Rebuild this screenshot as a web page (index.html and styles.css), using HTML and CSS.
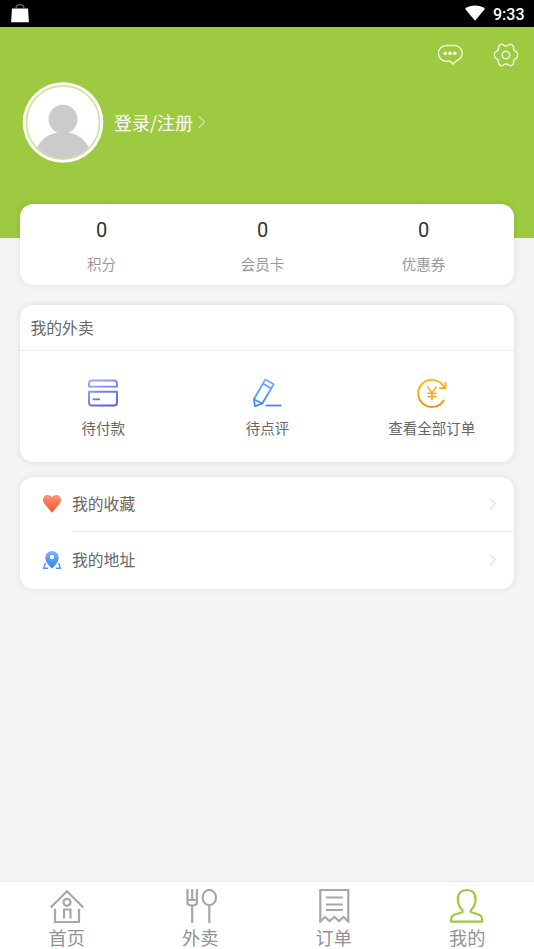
FILE: index.html
```html
<!DOCTYPE html>
<html lang="zh-CN">
<head>
<meta charset="utf-8">
<title>我的</title>
<link rel="stylesheet" href="styles.css">
</head>
<body>
<div class="status">
  <svg class="bag" width="20" height="20" viewBox="0 0 20 20"><path d="M2 5.5h16l.9 13.7H1.1z" fill="#fff"/><path d="M6 5.5C6 .3 14 .3 14 5.5" fill="none" stroke="#666" stroke-width="1.3"/></svg>
  <div class="status-right">
    <svg width="20" height="16" viewBox="0 0 20 16"><path d="M0 3.7C5.5-.6 14.5-.6 20 3.7L10 15.7z" fill="#fff"/></svg>
    <span class="time">9:33</span>
  </div>
</div>
<header class="hero">
  <div class="tools">
    <svg width="26" height="24" viewBox="0 0 26 24" fill="none" stroke="#fff" stroke-opacity=".85" stroke-width="1.4" stroke-linejoin="round"><path d="M9.300 2.500h7.500a7.700 7.800 0 0 1 3 15.200Q17.800 18.700 16 21.200L13.300 18.200H9.300A7.800 7.800 0 0 1 9.300 2.500z"/><g fill="#fff" stroke="none"><circle cx="8.300" cy="10.300" r="1.800"/><circle cx="13" cy="10.300" r="1.800"/><circle cx="17.800" cy="10.300" r="1.800"/></g></svg>
    <svg width="26" height="24" viewBox="0 0 26 24" fill="none" stroke="#fff" stroke-opacity=".85" stroke-width="1.4" stroke-linejoin="round"><path d="M7.800 1.300Q9 .8 10 1.900Q13 4.200 16 1.900Q17 .8 18.200 1.300Q20.700 2.400 20.500 4.400Q20.200 8 23.500 8.900Q24.500 9.200 24.600 12Q24.500 14.800 23.500 15.100Q20.200 16 20.500 19.600Q20.700 21.600 18.200 22.700Q17 23.200 16 22.100Q13 19.800 10 22.100Q9 23.200 7.800 22.700Q5.300 21.600 5.500 19.600Q5.800 16 2.500 15.100Q1.500 14.800 1.400 12Q1.500 9.200 2.500 8.900Q5.800 8 5.500 4.400Q5.300 2.400 7.800 1.300z"/><circle cx="13" cy="12" r="3.800"/></svg>
  </div>
  <div class="login">
    <svg width="82" height="82" viewBox="0 0 82 82"><defs><clipPath id="face"><circle cx="41" cy="41.500" r="36"/></clipPath></defs><circle cx="41" cy="41.500" r="40.300" fill="#fff"/><circle cx="41" cy="41.500" r="36.600" fill="#fff" stroke="#cde49b" stroke-width="1.700"/><g clip-path="url(#face)" fill="#cbcbcb"><circle cx="41" cy="38.300" r="14.500"/><path d="M13 71C18 58 27 51.200 41 51.200S64 58 69 71v12H13z"/></g></svg>
    <span class="login-text">登录/注册</span>
    <svg width="8" height="14" viewBox="0 0 8 14"><path d="M1 1.500L6.500 7 1 12.500" fill="none" stroke="#d3e6a9" stroke-width="1.300"/></svg>
  </div>
</header>
<main>
  <section class="card stats">
    <div><b>0</b><span>积分</span></div>
    <div><b>0</b><span>会员卡</span></div>
    <div><b>0</b><span>优惠券</span></div>
  </section>
  <section class="card orders">
    <h2>我的外卖</h2>
    <div class="actions">
      <div>
        <svg width="32" height="32" viewBox="0 0 32 32" fill="none" stroke="url(#pay)" stroke-width="1.900" stroke-linejoin="round"><defs><linearGradient id="pay" gradientUnits="userSpaceOnUse" x1="8" y1="3" x2="22" y2="30"><stop stop-color="#9ea5ff"/><stop offset="1" stop-color="#535dea"/></linearGradient></defs><path d="M2 9.600V6.500q0-3 3-3h22q3 0 3 3v3.100z"/><path d="M2 14.800h28V25.500q0 3-3 3H5q-3 0-3-3z"/><path d="M5.500 22.300h7.500"/></svg>
        <span>待付款</span>
      </div>
      <div>
        <svg width="32" height="32" viewBox="0 0 32 32" fill="none" stroke="url(#pen)" stroke-width="1.800" stroke-linejoin="round"><defs><linearGradient id="pen" gradientUnits="userSpaceOnUse" x1="10" y1="2" x2="12" y2="30"><stop stop-color="#79b6ff"/><stop offset="1" stop-color="#3982f0"/></linearGradient></defs><path d="M14.300 2.500L22.700 7.300 11.300 26.500 4 29.200 2.900 22.300zM12 6.700l8.200 4.700M2.900 22.300l8.400 4.200"/><path d="M14.500 28.500H30.500" stroke="#3f89f5"/></svg>
        <span>待点评</span>
      </div>
      <div>
        <svg width="32" height="32" viewBox="0 0 32 32" fill="none" stroke="url(#yen)" stroke-width="1.900"><defs><linearGradient id="yen" gradientUnits="userSpaceOnUse" x1="16" y1="2" x2="16" y2="30"><stop stop-color="#fabb24"/><stop offset="1" stop-color="#ed9505"/></linearGradient></defs><path d="M26.900 8.500A13.600 13.600 0 1 0 27.900 22.700"/><path d="M23.300 11.200H29.500V4.800M25.500 7L29 10.700"/><path d="M11.400 9.400L16 16 20.600 9.400M16 16v7M11.500 16.300h9M11.500 19.600h9" stroke-width="1.500"/></svg>
        <span>查看全部订单</span>
      </div>
    </div>
  </section>
  <section class="card links">
    <div class="row">
      <svg width="20" height="20" viewBox="0 0 20 20"><defs><linearGradient id="heart" x2="0" y2="1"><stop stop-color="#ff9478"/><stop offset="1" stop-color="#f95225"/></linearGradient></defs><path d="M10 18.700L2.400 9.700C-.8 5.500 1.900 1 5.500 1Q8.500 1 10 3.300Q11.500 1 14.500 1C18.100 1 20.800 5.500 17.600 9.700z" fill="url(#heart)"/></svg>
      <div class="row-body"><span>我的收藏</span><svg width="8" height="12" viewBox="0 0 8 12"><path d="M1.200 .8L6.400 6 1.200 11.200" fill="none" stroke="#ccc" stroke-width="1"/></svg></div>
    </div>
    <div class="row">
      <svg width="20" height="20" viewBox="0 0 20 20"><defs><linearGradient id="pin" x2="0" y2="1"><stop stop-color="#7eb2fb"/><stop offset="1" stop-color="#3480f3"/></linearGradient></defs><path fill-rule="evenodd" d="M10 1a6.700 6.700 0 0 1 6.700 6.700C16.700 12 12.500 16 10 18.500 7.500 16 3.300 12 3.300 7.700A6.700 6.700 0 0 1 10 1zm0 3.800a2.200 2.200 0 1 0 0 4.400 2.200 2.200 0 0 0 0-4.400z" fill="url(#pin)"/><path d="M3.300 13L1.700 18.300h4.500M16.700 13l1.600 5.300h-4.500" fill="none" stroke="#5095f8" stroke-width="1.400"/></svg>
      <div class="row-body"><span>我的地址</span><svg width="8" height="12" viewBox="0 0 8 12"><path d="M1.200 .8L6.400 6 1.200 11.200" fill="none" stroke="#ccc" stroke-width="1"/></svg></div>
    </div>
  </section>
</main>
<nav class="tabs">
  <div><svg width="36" height="36" viewBox="0 0 36 36" fill="none" stroke="#a7a7a7" stroke-width="2.200"><path d="M1.700 20.500L18 4.300 34.300 20.500M6 22v13h24V22M15 31.500v-9h6.500v9"/><circle cx="18" cy="15.300" r="3.500"/></svg><span>首页</span></div>
  <div><svg width="36" height="36" viewBox="0 0 36 36" fill="none" stroke="#a7a7a7" stroke-width="2.200"><path d="M5.500 2V15.500q0 3 4.700 3t4.700-3V2M10.200 2V13M10.200 18.500V36M5.500 13h9.400M27.300 18.500V36"/><ellipse cx="27.300" cy="10.500" rx="6.700" ry="7.600"/></svg><span>外卖</span></div>
  <div><svg width="36" height="36" viewBox="0 0 36 36" fill="none" stroke="#a7a7a7" stroke-width="2.200"><path d="M4.300 34.500V3h28v31.500l-4.700-4.500-4.600 4-4.700-4-4.700 4-4.600-4zM10 10.500h16.800M10 17.500h16.800M10 23h16.800"/></svg><span>订单</span></div>
  <div class="active"><svg width="36" height="36" viewBox="0 0 36 36" fill="none" stroke="#9bcb3c" stroke-width="2.200" stroke-linejoin="round"><path d="M13.500 23.200C10 20 8.800 15.500 8.800 12 8.800 6 12.400 3 17.700 3S26.600 6 26.600 12C26.600 15.500 25.300 20 21.800 23.200V25L30.700 28Q32.800 29 33 31.300L33.300 34.600H2L2.300 31.300Q2.500 29 4.700 28L13.500 25z"/></svg><span>我的</span></div>
</nav>
</body>
</html>
```
FILE: styles.css
```css
* { box-sizing: border-box; }
body {
  margin: 0;
  height: 949px;
  display: flex;
  flex-direction: column;
  overflow: hidden;
  background: #f4f4f4;
  color: #666;
  font-family: "Noto Sans CJK SC", sans-serif;
}
svg { display: block; flex: none; }
.status {
  height: 27px;
  flex: none;
  display: flex;
  justify-content: space-between;
  padding: 3px 9.500px 0 10px;
  background: #000;
}
.status-right { display: flex; gap: 8px; padding-top: 2px; }
.time { color: #fff; font: 500 16px/20px Roboto, sans-serif; }
.hero {
  height: 211px;
  flex: none;
  padding-top: 16px;
  background: #9dca40;
}
.tools { display: flex; justify-content: flex-end; gap: 30px; padding-right: 15px; }
.login { display: flex; align-items: center; margin: 14px 0 0 21.500px; }
.login-text { margin: 0 5px 0 10.500px; color: #fff; font-size: 18px; line-height: 24px; }
main { flex: 1; padding: 0 20px; }
.card {
  background: #fff;
  border-radius: 13px;
  box-shadow: 0 0 6px rgba(0, 0, 0, .1);
}
.stats {
  display: flex;
  height: 81px;
  margin-top: -34px;
  padding: 10px 10px 0 1px;
}
.stats div { flex: 1; text-align: center; }
.stats b {
  display: block;
  color: #333;
  font: 400 20px/32px Roboto, sans-serif;
}
.stats span { display: block; margin-top: 6px; color: #999; font-size: 14.500px; line-height: 24px; }
.orders { height: 157px; margin-top: 19.500px; }
.orders h2 {
  height: 46px;
  margin: 0;
  padding-left: 10.500px;
  border-bottom: 1px solid #eee;
  font-size: 15.800px;
  font-weight: 400;
  line-height: 45px;
}
.actions { display: flex; padding: 26px 0 0 1px; }
.actions div { flex: 1; display: flex; flex-direction: column; align-items: center; }
.actions span { margin-top: 7px; font-size: 14.500px; line-height: 24px; }
.links { height: 112px; margin-top: 15px; }
.row { display: flex; align-items: center; height: 56px; padding: 0 0 1px 22px; }
.row-body {
  flex: 1;
  display: flex;
  justify-content: space-between;
  align-items: center;
  height: 55px;
  margin-left: 10px;
  padding-right: 17px;
  font-size: 15.800px;
}
.row-body { border-bottom: 1px solid transparent; }
.row:first-child .row-body { border-color: #eee; }
.tabs {
  display: flex;
  height: 68px;
  flex: none;
  padding-top: 5px;
  border-top: 1px solid #eaeaea;
  background: #fff;
}
.tabs div { flex: 1; display: flex; flex-direction: column; align-items: center; }
.tabs span { color: #929292; font-size: 18.200px; line-height: 28px; }
```
